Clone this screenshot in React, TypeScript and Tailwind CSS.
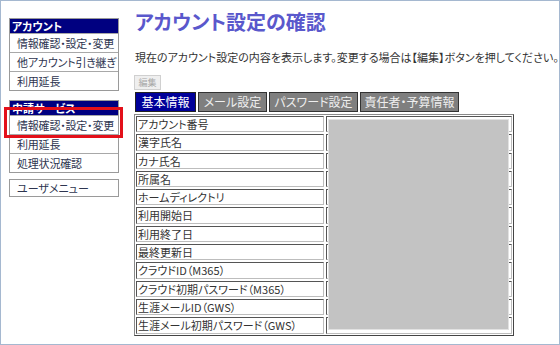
const rows = [
  "アカウント番号",
  "漢字氏名",
  "カナ氏名",
  "所属名",
  "ホームディレクトリ",
  "利用開始日",
  "利用終了日",
  "最終更新日",
  "クラウドID（M365）",
  "クラウド初期パスワード（M365）",
  "生涯メールID（GWS）",
  "生涯メール初期パスワード（GWS）",
]

const tabs = [
  { label: "基本情報", w: "w-[61px]", active: true },
  { label: "メール設定", w: "w-[69px]", active: false },
  { label: "パスワード設定", w: "w-[89px]", active: false },
  { label: "責任者・予算情報", w: "w-[99px]", active: false },
]

function MenuGroup({ title, items }: { title: string; items: string[] }) {
  return (
    <div className="border border-[#9a9a9a] bg-white">
      <div className="h-[14px] bg-[#000080] px-[2px] text-[11px] font-bold leading-[14px] text-white">{title}</div>
      {items.map((it) => (
        <div
          key={it}
          className="h-[19px] overflow-hidden whitespace-nowrap border-t border-[#a8a8a8] pl-[7px] text-[11px] leading-[18px] tracking-[-0.2px] text-[#2e3550]"
        >
          {it}
        </div>
      ))}
    </div>
  )
}

export default function App() {
  return (
    <div className="flex h-[345px] w-[560px] overflow-hidden border border-[#a5b8d0] bg-white font-['Noto_Sans_CJK_JP','Noto_Sans',sans-serif] [font-feature-settings:'palt']">
      <aside className="relative ml-[8px] mt-[17px] flex w-[110px] shrink-0 flex-col">
        <MenuGroup title="アカウント" items={["情報確認・設定・変更", "他アカウント引き継ぎ", "利用延長"]} />
        <div className="mt-[9px]">
          <MenuGroup title="申請サービス" items={["情報確認・設定・変更", "利用延長", "処理状況確認"]} />
        </div>
        <div className="mt-[6px] h-[18px] border border-[#9a9a9a] pl-[7px] text-[11px] leading-[16px] text-[#2e3550]">
          ユーザメニュー
        </div>
        <div className="absolute left-[-5px] top-[89px] h-[31px] w-[119px] border-[3px] border-[#e3101a]" />
      </aside>

      <main className="ml-[15px] flex flex-col">
        <h1 className="mt-[9px] pl-[1px] text-[20px] font-bold leading-[24px] text-[#5a58cc]">アカウント設定の確認</h1>
        <p className="mt-[15px] pl-[1px] text-[11px] leading-[16px] text-[#333]">
          現在のアカウント設定の内容を表示します。変更する場合は【編集】ボタンを押してください。
        </p>
        <button
          disabled
          className="mt-[10px] h-[15px] w-[27px] border border-[#d0d0d0] bg-[#efefef] text-[9px] leading-[13px] text-[#a8a8a8]"
        >
          編集
        </button>
        <div className="mt-[2px] flex gap-[2px] pl-[1px]">
          {tabs.map((t) => (
            <div
              key={t.label}
              className={
                t.active
                  ? `${t.w} flex h-[20px] items-center justify-center border border-[#222] bg-[#000099] text-[12px] text-white`
                  : `${t.w} flex h-[20px] items-center justify-center border border-[#333] bg-[#7f7f7f] text-[12px] text-[#eeeeee]`
              }
            >
              {t.label}
            </div>
          ))}
        </div>
        <div className="relative mt-[2px] w-[380px] border border-[#8a8a8a] border-b-[#444] border-r-[#444] bg-white p-[1px]">
          <div className="grid grid-cols-[188px_186px] gap-[2px]">
            {rows.map((r) => (
              <div key={r} className="contents">
                <div className="h-[16.3px] whitespace-nowrap border border-[#555] border-b-[#bdbdbd] border-r-[#bdbdbd] pl-[1px] text-[11px] leading-[14px] text-[#333]">
                  {r}
                </div>
                <div className="h-[16.3px] border border-[#555] border-b-[#bdbdbd] border-r-[#bdbdbd]" />
              </div>
            ))}
          </div>
          <div className="absolute left-[193px] top-[4px] bottom-[5px] w-[181px] border border-[#e2e2e2] bg-[#c3c3c3]" />
        </div>
      </main>
    </div>
  )
}
